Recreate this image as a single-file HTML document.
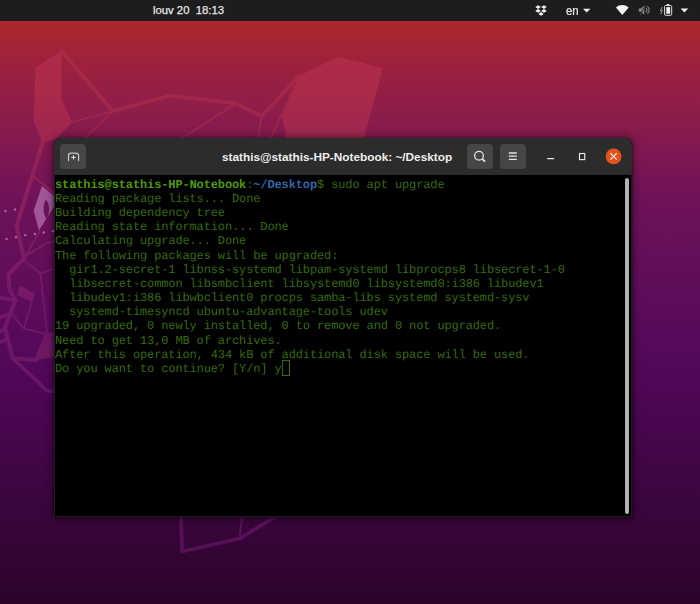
<!DOCTYPE html>
<html><head><meta charset="utf-8">
<style>
html,body{margin:0;padding:0;}
body{width:700px;height:604px;overflow:hidden;position:relative;
background:linear-gradient(to bottom,#1d1d1d 0,#1d1d1d 21px,#ac282e 21px,#a8262e 29px,#911e48 100px,#6e1259 200px,#54095a 350px,#4a0650 415px,#3e0642 485px,#2c0428 604px);
font-family:"Liberation Sans",sans-serif;}
#wall{position:absolute;left:0;top:0;width:700px;height:604px;filter:blur(0.4px);}
#bar{position:absolute;left:0;top:0;width:700px;height:21px;background:#1d1d1d;color:#e8e8e8;}
#clock{position:absolute;left:153px;top:3px;font-size:11.3px;line-height:14px;white-space:pre;-webkit-text-stroke:0.25px #e8e8e8;}
#en{position:absolute;left:566px;top:1.8px;-webkit-text-stroke:0.2px #e8e8e8;font-size:13px;line-height:17px;transform:scaleX(0.88);transform-origin:0 0;}
#win{position:absolute;left:54px;top:138px;width:578px;height:379px;border-radius:7px 7px 0 0;overflow:hidden;
box-shadow:0 0 9px 1px rgba(0,0,0,0.45),0 1px 3px rgba(0,0,0,0.5);background:#000;}
#hdr{position:absolute;left:0;top:0;width:578px;height:37px;background:#2c2c2c;}
#title{position:absolute;left:168px;top:12.3px;white-space:nowrap;font-weight:bold;font-size:11.8px;line-height:15px;color:#eeeeee;}
.btn{position:absolute;top:6px;width:26px;height:25px;border-radius:4px;background:#464646;}
#term{position:absolute;left:1px;top:39.8px;font-family:"Liberation Mono",monospace;font-size:12px;letter-spacing:-0.12px;text-rendering:geometricPrecision;line-height:14.15px;color:#376a10;white-space:pre;}
.b{font-weight:bold;color:#4e9a06;}
.bl{font-weight:bold;color:#3465a4;}
#win::after{content:"";position:absolute;left:0;top:37px;right:0;bottom:0;border:1px solid #1e1c1e;border-top:none;}
#sb{position:absolute;left:570.5px;top:40px;width:4.5px;height:336px;border-radius:3px;background:#b2b2b2;}
</style></head><body>
<svg id="wall" width="700" height="604" viewBox="0 0 700 604">
<defs>
<linearGradient id="lg" gradientUnits="userSpaceOnUse" x1="0" y1="40" x2="0" y2="604">
<stop offset="0" stop-color="#b02c4a"/>
<stop offset="0.09" stop-color="#aa2a48"/>
<stop offset="0.42" stop-color="#7a1a6a"/>
<stop offset="0.9" stop-color="#561058"/>
<stop offset="1" stop-color="#4e0e50"/>
</linearGradient>
<linearGradient id="ls" gradientUnits="userSpaceOnUse" x1="0" y1="40" x2="0" y2="604">
<stop offset="0" stop-color="#aa2a48"/>
<stop offset="0.09" stop-color="#a42848"/>
<stop offset="0.42" stop-color="#78196a"/>
<stop offset="0.9" stop-color="#561058"/>
<stop offset="1" stop-color="#4e0e50"/>
</linearGradient>
</defs>
<path d="M632,274 L700,205" stroke="#ff70d0" stroke-opacity="0.025" stroke-width="2" fill="none"/>
<g fill="url(#lg)" stroke="none">
<path d="M35.7,67.3 L61.4,50.8 L61.4,98.8 L72.2,122 L56,138.8 L42.3,143.3 L33.6,121 Z"/>
<path d="M299,76 L338,57 L383,68 L364,138 L286,138 L282,116 Z"/>
<path d="M19.9,285.5 L34.8,293.4 L31.8,301.8 L17.4,294.9 Z"/>
<path d="M47.4,335 L54,338 L54,357 L35.8,360.3 Z"/>
</g>
<g fill="none" stroke="url(#ls)" stroke-linejoin="round" stroke-linecap="round">
<path stroke-width="3.8" d="M61.4,50.8 L112.7,111.2 L170.4,95.7 L236,103.4 L261.7,116.3 L299,76"/>
<path stroke-width="1.8" d="M112.7,111.2 L72.2,122 M112.7,111.2 L82.9,140 M236,103.4 L182,138 M261.7,116.3 L257.9,138 M295,86 L270.7,138"/>
<path stroke-width="4" d="M42.3,143.3 L16.6,225.6 L21.9,250 L24.5,258.2 L8.6,274.1 L8.9,280 L9.4,289 L15.3,300.3 L5,327.7 L12.6,358.3 L35.8,360.3 L46.4,335.2 L56,333.8"/>
<path stroke-width="3.6" d="M15.3,300.3 L-2,297.6 M5,329 L-2,333 M7,339 L-2,343 M0,317.7 L11,312.8 M12.6,358.3 L35.8,380 L46.4,390.6 L56,392"/>
<path stroke-width="1.8" d="M11,312.8 L23.8,328.7 L47.7,334.1 L56,333.6 M31.8,301.8 L23.8,328.7 M40.4,273.5 L47.2,334 M24.5,258.2 L39.7,231 M25.8,255.8 L47.7,242.5 L56,241 M24.5,260.9 L40.4,273.5 L56,268.2 M33,176 L56,195"/>
<path stroke-width="3.6" d="M181,517 L182.2,551.4 L239.4,538.6 L275,517"/>
<path stroke-width="2.2" d="M239.4,538.6 L242,517"/>
</g>
<path fill="#a0569a" d="M41.9,186 L56,197.5 L56,203.6 L38.9,230.6 L33.7,210.5 Z"/>
<path fill="#6c125e" d="M46,199.7 C49.8,203.5 50,213 46.6,218.9 C42.6,213.5 42.6,204.5 46,199.7 Z"/>
<g fill="#a866a2">
<circle cx="5.5" cy="211" r="1.2"/><circle cx="15" cy="209.5" r="1.2"/>
<circle cx="6.6" cy="238.9" r="1.2"/><circle cx="15.9" cy="237.3" r="1.2"/><circle cx="25.2" cy="235.3" r="1.2"/><circle cx="34.8" cy="234" r="1.2"/><circle cx="43.8" cy="232.5" r="1.2"/><circle cx="52.9" cy="231" r="1.2"/>
</g>
</svg>
<div id="bar">
<div id="clock">louv 20  18:13</div>
<div id="en">en</div>
<svg style="position:absolute;left:0;top:0" width="700" height="21" viewBox="0 0 700 21">
<g fill="#f2f2f2">
<path d="M538.1,5.20 L540.90,7.1 L538.1,9.00 L535.30,7.1 Z M544,5.20 L546.80,7.1 L544,9.00 L541.20,7.1 Z M538.1,9.00 L540.90,10.9 L538.1,12.80 L535.30,10.9 Z M544,9.00 L546.80,10.9 L544,12.80 L541.20,10.9 Z M541.05,12.10 L543.65,13.9 L541.05,15.70 L538.45,13.9 Z"/>
<path d="M583,8.7 L590.4,8.7 L586.7,12.6 Z"/>
<path d="M622.3,15 L615.9,7.4 A10,10 0 0 1 628.7,7.4 Z"/>
<path d="M680.6,8.6 L688.2,8.6 L684.4,12.6 Z"/>
<rect x="666.3" y="7.1" width="3.8" height="6.6"/>
</g>
<g fill="none" stroke="#e0e0e0" stroke-width="1">
<rect x="664.6" y="5.5" width="7.1" height="9.8" rx="1"/>
</g>
<path d="M666.8,4 L669.3,4 L669.3,5.5 L666.8,5.5 Z" fill="#e0e0e0"/>
<path d="M662.3,7 L660.4,10.9 L662.3,10.3 L660.7,14.3" fill="none" stroke="#9a9a9a" stroke-width="1"/>
<g fill="#8a8a8a">
<path d="M638.8,8.4 L641,8.4 L644.3,5.5 L644.3,14.7 L641,11.8 L638.8,11.8 Z"/>
</g>
<g fill="none" stroke="#8a8a8a" stroke-width="1.1">
<path d="M645.97,8.11 A2.6,2.6 0 0 1 645.97,12.09 M647.4,6.42 A4.8,4.8 0 0 1 647.4,13.78"/>
</g>
<path d="M639.8,15.2 L645.8,5" stroke="#1d1d1d" stroke-width="1.2" fill="none"/>
<path d="M640.3,15 L646,5.4" stroke="#6a6a6a" stroke-width="0.6" fill="none"/>
</svg>
</div>
<div id="win">
<div id="hdr">
<div class="btn" style="left:6px"></div>
<div class="btn" style="left:413px"></div>
<div class="btn" style="left:446px"></div>
<svg style="position:absolute;left:0;top:0" width="578" height="37" viewBox="0 0 578 37">
<g fill="none" stroke="#e6e6e6" stroke-width="1.3">
<path d="M14.5,22.6 L14.5,17.8 Q14.5,15.1 17.2,15.1 L21.9,15.1 Q24.6,15.1 24.6,17.8 L24.6,22.6" stroke-width="1.2" stroke="#c8c8c8" stroke-linecap="round"/>
<path d="M19.5,17.3 L19.5,21.5 M17.4,19.4 L21.6,19.4" stroke-width="1" stroke="#f4f4f4"/>
<circle cx="425" cy="17.8" r="4.4" stroke-width="1.3"/>
<path d="M428.3,21 L431,23.6" stroke-width="1.8"/>
<path d="M454.8,15 L462.8,15 M454.8,18.2 L462.8,18.2 M454.8,21.4 L462.8,21.4" stroke-width="1.3"/>
<path d="M493.2,20.5 L500.1,20.5" stroke-width="1.25"/>
<rect x="525.5" y="15.5" width="5.2" height="6.1" stroke-width="1.15"/>
</g>
<circle cx="559.6" cy="18.4" r="7.9" fill="#e45219"/>
<path d="M556.4,15.2 L562.8,21.6 M562.8,15.2 L556.4,21.6" stroke="#f8f0ec" stroke-width="1.2" fill="none"/>
</svg>
<div id="title">stathis@stathis-HP-Notebook: ~/Desktop</div>
</div>
<div id="term"><span class="b">stathis@stathis-HP-Notebook</span>:<span class="bl">~/Desktop</span>$ sudo apt upgrade
Reading package lists... Done
Building dependency tree
Reading state information... Done
Calculating upgrade... Done
The following packages will be upgraded:
  gir1.2-secret-1 libnss-systemd libpam-systemd libprocps8 libsecret-1-0
  libsecret-common libsmbclient libsystemd0 libsystemd0:i386 libudev1
  libudev1:i386 libwbclient0 procps samba-libs systemd systemd-sysv
  systemd-timesyncd ubuntu-advantage-tools udev
19 upgraded, 0 newly installed, 0 to remove and 0 not upgraded.
Need to get 13,0 MB of archives.
After this operation, 434 kB of additional disk space will be used.
Do you want to continue? [Y/n] y</div>
<div style="position:absolute;left:227.5px;top:222px;width:6.5px;height:13.5px;border:1px solid #376a10;"></div>
<div id="sb"></div>
</div>
</body></html>
